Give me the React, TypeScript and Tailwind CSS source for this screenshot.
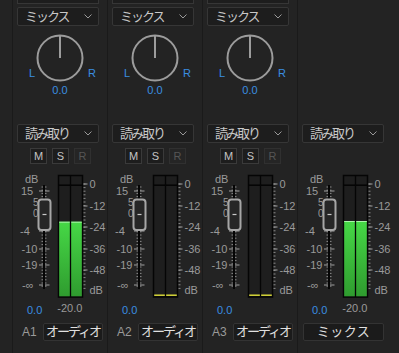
import React from "react";

const FONT = '"Liberation Sans", "Noto Sans CJK JP", sans-serif';

type Track = {
  label?: string;
  name: string;
  pan: boolean;
  msr: boolean;
  level: number | null; // top of the green fill, svg units
};

const tracks: Track[] = [
  { label: "A1", name: "オーディオ", pan: true, msr: true, level: 51.7 },
  { label: "A2", name: "オーディオ", pan: true, msr: true, level: null },
  { label: "A3", name: "オーディオ", pan: true, msr: true, level: null },
  { name: "ミックス", pan: false, msr: false, level: 51 },
];

function Chevron() {
  return (
    <svg width="8" height="5" viewBox="0 0 8 5" className="shrink-0">
      <path d="M0.5 0.5 L4 4 L7.5 0.5" fill="none" stroke="#9a9a9a" strokeWidth="1" />
    </svg>
  );
}

function Dropdown({ text }: { text: string }) {
  return (
    <div className="ml-[4px] flex h-[19px] w-[82px] items-center justify-between rounded-[2px] border border-[#363636] bg-[#1d1d1d] pl-[7px] pr-[6px]">
      <span className="text-[13px] leading-none tracking-[-2px] text-[#c8c8c8]">{text}</span>
      <Chevron />
    </div>
  );
}

function Knob() {
  return (
    <svg width="48" height="48" viewBox="0 0 48 48">
      <circle cx="24" cy="24" r="22.5" fill="none" stroke="#9c9c9c" strokeWidth="2" />
      <line x1="24" y1="2" x2="24" y2="24" stroke="#9c9c9c" strokeWidth="2" />
    </svg>
  );
}

// label, x, y, font size
const leftLabels: [string, number, number, number][] = [
  ["15", 9, 21, 11],
  ["5", 21, 32.5, 10],
  ["0", 21, 43.5, 10],
  ["-4", 8, 61, 11],
  ["-10", 9.5, 79, 11],
  ["-19", 9.5, 95, 11],
  ["-∞", 10, 115, 11],
];

const rightLabels: [string, number][] = [
  ["0", 14],
  ["-12", 36],
  ["-24", 57],
  ["-36", 79],
  ["-48", 100],
  ["dB", 120],
];

function Meter({ level }: { level: number | null }) {
  const minorLeft: number[] = [];
  for (let y = 17; y <= 117; y += 3.2) minorLeft.push(y);
  const minorRight: number[] = [];
  for (let y = 14; y <= 120; y += 3.6) minorRight.push(y);

  return (
    <svg width="95" height="130" viewBox="0 0 95 130" className="ml-[-1px]" style={{ fontFamily: FONT }}>
      <defs>
        <linearGradient id="grn" x1="0" y1="0" x2="0" y2="1">
          <stop offset="0" stopColor="#46d846" />
          <stop offset="1" stopColor="#2f9c2f" />
        </linearGradient>
      </defs>

      <text x="13" y="13" fontSize="11" fill="#9a9a9a">dB</text>

      {/* fader scale */}
      {minorLeft.map((y, i) => (
        <g key={i}>
          <line x1="29.5" y1={y} x2="31" y2={y} stroke="#8a8a8a" strokeWidth="1" />
          <line x1="33" y1={y} x2="34.5" y2={y} stroke="#8a8a8a" strokeWidth="1" />
        </g>
      ))}
      {leftLabels.map(([t, x, y, fs]) => (
        <g key={t}>
          <line x1="27" y1={y} x2="37.5" y2={y} stroke="#a0a0a0" strokeWidth="1" />
          <text x={x} y={y + fs * 0.36} fontSize={fs} fill="#9a9a9a">{t}</text>
        </g>
      ))}
      <line x1="32" y1="15" x2="32" y2="119" stroke="#050505" strokeWidth="2" />

      {/* fader handle */}
      <rect x="26.5" y="29.5" width="12" height="30.5" rx="3" fill="#262626" stroke="#a6a6a6" strokeWidth="2" />
      <line x1="30.5" y1="44.5" x2="34.5" y2="44.5" stroke="#c8c8c8" strokeWidth="1.2" />

      {/* meter */}
      <rect x="46.5" y="5.5" width="24" height="121.5" fill="#1e1e1e" stroke="#050505" strokeWidth="1.5" />
      {level !== null && (
        <>
          <rect x="47.2" y={level} width="22.6" height={126.3 - level} fill="url(#grn)" />
          <line x1="47.2" y1={level + 0.5} x2="69.8" y2={level + 0.5} stroke="#aaf5aa" strokeWidth="1" />
        </>
      )}
      {level === null && <line x1="47.2" y1="125.2" x2="69.8" y2="125.2" stroke="#e2e23a" strokeWidth="1.4" />}
      <line x1="46.5" y1="15.2" x2="70.5" y2="15.2" stroke="#050505" strokeWidth="1.5" />
      <line x1="58.5" y1="5.5" x2="58.5" y2="127" stroke="#050505" strokeWidth="1.3" />

      {/* meter scale */}
      {minorRight.map((y, i) => (
        <line key={i} x1="71.5" y1={y} x2="73.5" y2={y} stroke="#8a8a8a" strokeWidth="1" />
      ))}
      {rightLabels.map(([t, y]) => (
        <g key={t}>
          {t !== "dB" && <line x1="71.5" y1={y} x2="75.5" y2={y} stroke="#a0a0a0" strokeWidth="1" />}
          <text x="77.5" y={y + 4} fontSize="11" fill="#9a9a9a">{t}</text>
        </g>
      ))}
    </svg>
  );
}

function Strip({ t, last }: { t: Track; last?: boolean }) {
  return (
    <div className={`flex flex-col border-l border-[#1a1a1a] ${last ? "flex-1" : "w-[95px]"}`}>
      {t.pan ? (
        <>
          <div className="ml-[4px] h-[4px] w-[82px] border-x border-b border-[#363636] bg-[#1d1d1d]" />
          <div className="mt-[3px]">
            <Dropdown text="ミックス" />
          </div>
          <div className="mt-[8px] flex items-end pl-[16px] text-[11px] leading-[14px] text-[#3a8ee0]">
            <span className="w-[7px] pb-[2px]">L</span>
            <Knob />
            <span className="ml-[4px] pb-[2px]">R</span>
          </div>
          <div className="ml-[-1px] mt-[1px] w-[95px] pl-[1px] text-center text-[11px] leading-[14px] text-[#3a8ee0]">0.0</div>
          <div className="mt-[27px]">
            <Dropdown text="読み取り" />
          </div>
        </>
      ) : (
        <div className="mt-[124px]">
          <Dropdown text="読み取り" />
        </div>
      )}

      {t.msr ? (
        <div className="ml-[17px] mt-[5px] flex h-[16px] gap-[5px] text-[11px] leading-none">
          <div className="flex w-[17px] items-center justify-center border border-[#3a3a3a] bg-[#1d1d1d] text-[#c4c4c4]">M</div>
          <div className="flex w-[17px] items-center justify-center border border-[#3a3a3a] bg-[#1d1d1d] text-[#c4c4c4]">S</div>
          <div className="flex w-[17px] items-center justify-center border border-[#303030] bg-[#252525] text-[#555555]">R</div>
        </div>
      ) : (
        <div className="mt-[5px] h-[16px]" />
      )}

      <div className="mt-[6px]">
        <Meter level={t.level} />
      </div>

      <div className="mt-[1px] flex h-[14px] items-start text-[11px] leading-[14px]">
        <span className="ml-[14px] mt-[2px] text-[#3a8ee0]">0.0</span>
        {t.level !== null && <span className="ml-[15px] text-[#9a9a9a]">-20.0</span>}
      </div>

      <div className="mt-[8px] flex h-[18px] items-center">
        {t.label ? (
          <>
            <span className="ml-[9px] w-[21px] text-[12px] text-[#9a9a9a]">{t.label}</span>
            <div className="flex h-[18px] w-[60px] items-center justify-center rounded-[2px] border border-[#333333] bg-[#1b1b1b] text-[13px] tracking-[-2px] text-[#e0e0e0]">
              {t.name}
            </div>
          </>
        ) : (
          <div className="ml-[5px] flex h-[18px] w-[81px] items-center justify-center rounded-[2px] border border-[#333333] bg-[#1b1b1b] text-[13px] tracking-[0.5px] text-[#e0e0e0]">
            {t.name}
          </div>
        )}
      </div>
    </div>
  );
}

export default function App() {
  return (
    <div className="flex h-[353px] w-[399px] overflow-hidden bg-[#232323] pl-[12px]" style={{ fontFamily: FONT }}>
      {tracks.map((t, i) => (
        <Strip key={i} t={t} last={i === tracks.length - 1} />
      ))}
    </div>
  );
}
